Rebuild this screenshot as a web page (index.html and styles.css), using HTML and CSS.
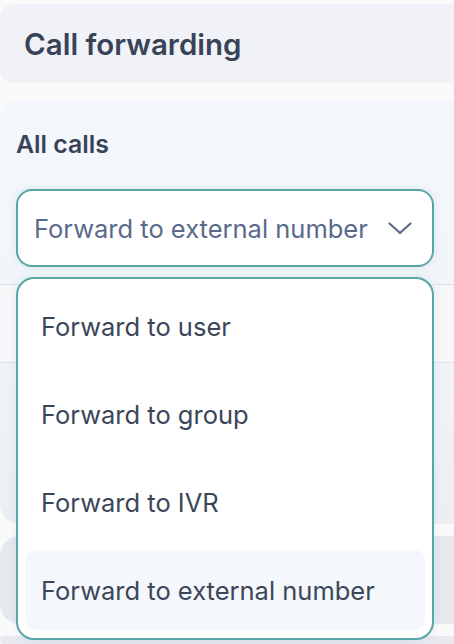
FILE: index.html
```html
<!DOCTYPE html>
<html lang="en">
<head>
<meta charset="utf-8">
<title>Call forwarding</title>
<link rel="stylesheet" href="styles.css">
</head>
<body>
<div class="page">
  <header class="section-header">
    <h1 class="section-title">Call forwarding</h1>
  </header>

  <section class="panel">
    <h2 class="panel-label">All calls</h2>
    <div class="select-wrap">
      <button class="select" type="button">
        <span class="select-value">Forward to external number</span>
        <svg class="chevron" width="24" height="13" viewBox="0 0 24 13" aria-hidden="true">
          <path d="M1.5 1.5 L12 11 L22.5 1.5" fill="none" stroke="currentColor" stroke-width="2.2" stroke-linecap="round" stroke-linejoin="round"/>
        </svg>
      </button>
      <ul class="menu">
        <li class="menu-item">Forward to user</li>
        <li class="menu-item">Forward to group</li>
        <li class="menu-item">Forward to IVR</li>
        <li class="menu-item is-active">Forward to external number</li>
      </ul>
    </div>
    <div class="field-row"></div>
    <div class="panel-rest"></div>
  </section>

  <section class="card"></section>
  <section class="card card-last"></section>
</div>
</body>
</html>
```

FILE: styles.css
```css
* { box-sizing: border-box; }

html, body {
  margin: 0;
  padding: 0;
  overflow: hidden;
  background: #fafafb;
  font-family: Inter, "Noto Sans", sans-serif;
}

.page {
  width: 100%;
  height: 644px;
  padding-top: 4px;
  display: flex;
  flex-direction: column;
  overflow: hidden;
}

.section-header {
  flex: none;
  height: 79px;
  background: #f0f2f7;
  border-radius: 14px 0 0 14px;
  display: flex;
  align-items: center;
  padding-left: 24px;
}

.section-title {
  margin: 0;
  font-size: 29.5px;
  font-weight: 600;
  color: #384357;
}

.panel {
  flex: none;
  margin-top: 17px;
  height: 424px;
  background: linear-gradient(180deg, #f4f7fb 0%, #f2f5f9 45%, #eceef4 100%);
  border-radius: 20px 0 0 20px;
  display: flex;
  flex-direction: column;
}

.panel-label {
  flex: none;
  margin: 0;
  padding: 29px 0 0 16px;
  font-size: 24.8px;
  font-weight: 600;
  color: #384357;
  height: 89px;
}

.select-wrap {
  flex: none;
  position: relative;
  width: 418px;
  margin-left: 16px;
}

.select {
  width: 418px;
  height: 78px;
  background: #fff;
  border: 2px solid #58a6a6;
  border-radius: 16px;
  display: flex;
  align-items: center;
  justify-content: space-between;
  padding: 0 20px 0 16px;
  font: inherit;
  box-shadow: 0 0 8px rgba(88, 166, 166, 0.18);
  color: #5a6a8a;
}

.select-value {
  font-size: 25.5px;
  color: #5a6a8a;
}

.chevron { color: #5a6a8a; display: block; }

.menu {
  position: absolute;
  left: 0;
  top: 88px;
  z-index: 5;
  width: 418px;
  margin: 0;
  padding: 7px 7px 8px;
  list-style: none;
  background: #fff;
  border: 2px solid #58a6a6;
  border-radius: 18px;
  display: flex;
  flex-direction: column;
  gap: 8px;
  box-shadow: 0 0 10px rgba(88, 166, 166, 0.15);
}

.menu-item {
  height: 80px;
  display: flex;
  align-items: center;
  padding-left: 16px;
  border-radius: 10px;
  font-size: 25.5px;
  color: #3c4659;
}

.menu-item.is-active { background: #f4f7fb; }

.field-row {
  flex: none;
  margin-top: 17px;
  height: 79px;
  background: #f7f7f9;
  border-top: 1px solid #dfe2ee;
  border-bottom: 1px solid #dfe2ee;
}

.panel-rest { flex: 1; }

.card {
  flex: none;
  margin-top: 12px;
  height: 88px;
  background: #e7e9ef;
  border-radius: 20px 0 0 20px;
}

.card-last { height: 8px; }
```
